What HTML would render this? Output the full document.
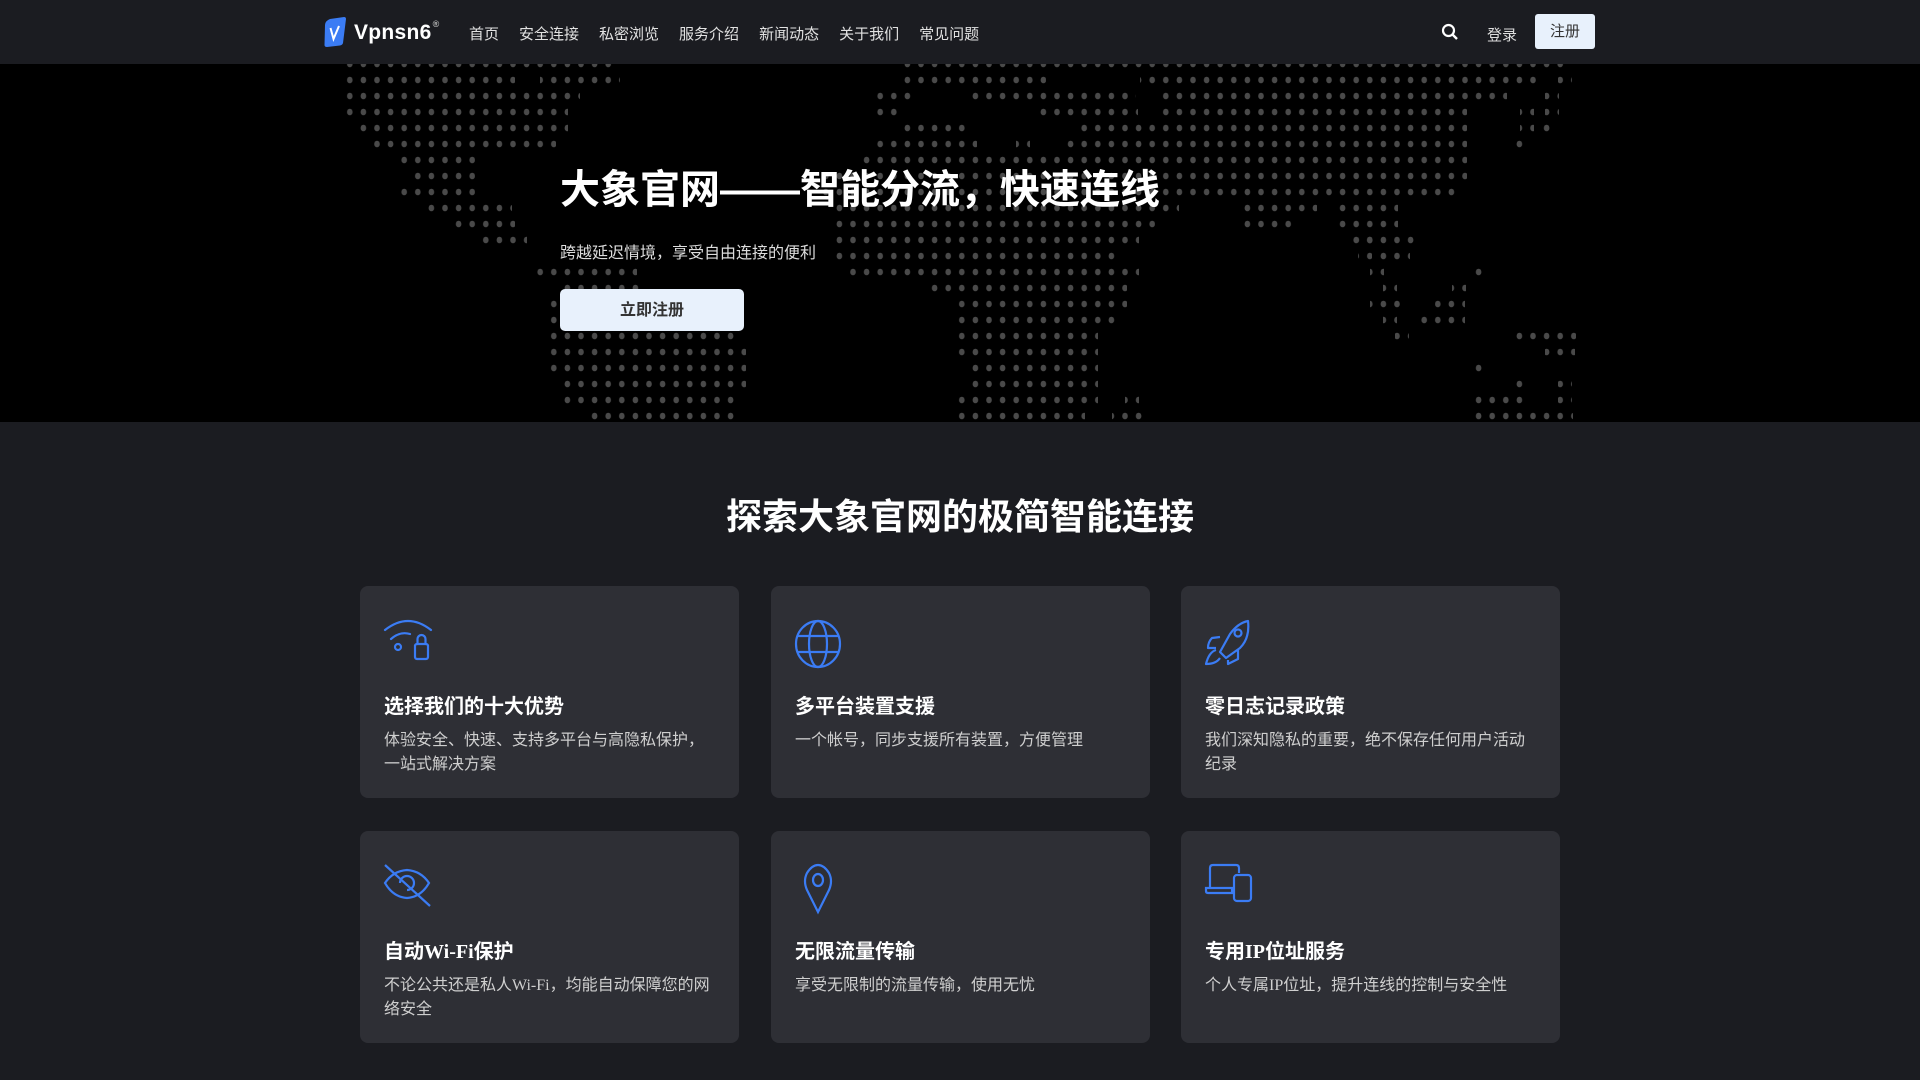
<!DOCTYPE html>
<html><head><meta charset="utf-8">
<style>
*{margin:0;padding:0;box-sizing:border-box}
body{width:1920px;height:1080px;overflow:hidden;background:#1b1c21;font-family:"Liberation Sans","Noto Sans CJK SC",sans-serif;color:#fff}
.hdr{position:absolute;left:0;top:0;width:1920px;height:64px;background:#1b1c21;z-index:2}
.logo{position:absolute;left:324px;top:17px}
.brand{position:absolute;left:354px;top:21px;font-size:21px;font-weight:bold;color:#fff;letter-spacing:0.3px}
.brand sup{font-size:9px;color:#bbb;vertical-align:top;position:relative;top:-2px;margin-left:1px}
.nav{position:absolute;left:469px;top:23px;font-size:15px;color:#e2e2e2;white-space:nowrap}
.nav span{margin-right:20px}
.search{position:absolute;left:1441px;top:23px}
.login{position:absolute;left:1487px;top:24px;font-size:15px;color:#ddd}
.reg{position:absolute;left:1535px;top:14px;width:60px;height:35px;background:#e8f1fc;border-radius:3px;color:#333;font-size:15px;text-align:center;line-height:36px}
.hero{position:absolute;left:0;top:64px;width:1920px;height:358px;background:#000;overflow:hidden}
.hero svg{position:absolute;left:0;top:0}
.h1{position:absolute;left:560px;top:93px;font-size:40px;font-weight:bold;color:#fff;white-space:nowrap;letter-spacing:0}
.sub{position:absolute;left:560px;top:175px;font-size:16px;color:#ddd}
.cta{position:absolute;left:560px;top:225px;width:184px;height:42px;background:#e8f1fc;border-radius:5px;color:#333;font-size:16px;font-weight:bold;text-align:center;line-height:43px}
.sec{position:absolute;left:0;top:488px;width:1920px;text-align:center;font-size:36px;font-weight:bold;color:#fff}
.card{position:absolute;width:379px;height:212px;background:#2e2f35;border-radius:8px;font-family:"Liberation Serif","Noto Sans CJK SC",serif}
.card svg{position:absolute;left:23px;top:32px}
.card h3{position:absolute;left:24px;top:104px;font-size:20px;font-weight:bold;color:#fff}
.card p{position:absolute;left:24px;top:143px;width:335px;font-size:16px;line-height:24px;color:#cfcfcf}
</style></head><body>
<div class="hdr">
<svg class="logo" width="22" height="30" viewBox="0 0 22 30"><path d="M6 2 L20 0 Q22 0 22 2 L19 26 Q18.5 28 16 28.5 L3 30 Q0.5 30 0.5 28 L1 8 Q1 4 6 2Z" fill="#3b7cf4"/><path d="M6.5 11 L9.5 22 L15 9" stroke="#fff" stroke-width="2" fill="none"/></svg>
<div class="brand">Vpnsn6<sup>®</sup></div>
<div class="nav"><span>首页</span><span>安全连接</span><span>私密浏览</span><span>服务介绍</span><span>新闻动态</span><span>关于我们</span><span>常见问题</span></div>
<svg class="search" width="18" height="18" viewBox="0 0 18 18"><circle cx="7.5" cy="7.5" r="5.5" stroke="#fff" stroke-width="2.2" fill="none"/><path d="M11.5 11.5 L16 16" stroke="#fff" stroke-width="2.4"/></svg>
<div class="login">登录</div>
<div class="reg">注册</div>
</div>
<div class="hero">
<svg width="1920" height="358" viewBox="0 64 1920 358">
<defs><pattern id="d" patternUnits="userSpaceOnUse" x="343" y="56" width="13.6" height="16"><ellipse cx="6.8" cy="8" rx="2.8" ry="3.3" fill="#4a4a4a"/></pattern></defs>
<g fill="url(#d)">
<rect x="343" y="56" width="272" height="16"/><rect x="902" y="56" width="665" height="16"/>
<rect x="343" y="72" width="172" height="16"/><rect x="540" y="72" width="80" height="16"/><rect x="902" y="72" width="144" height="16"/><rect x="1140" y="72" width="396" height="16"/><rect x="1558" y="72" width="14" height="16"/>
<rect x="343" y="88" width="237" height="16"/><rect x="874" y="88" width="40" height="16"/><rect x="966" y="88" width="170" height="16"/><rect x="1157" y="88" width="350" height="16"/><rect x="1545" y="88" width="14" height="16"/>
<rect x="343" y="104" width="225" height="16"/><rect x="874" y="104" width="30" height="16"/><rect x="1038" y="104" width="100" height="16"/><rect x="1157" y="104" width="310" height="16"/><rect x="1520" y="104" width="14" height="16"/><rect x="1545" y="104" width="14" height="16"/>
<rect x="355" y="120" width="213" height="16"/><rect x="902" y="120" width="63" height="16"/><rect x="1076" y="120" width="391" height="16"/><rect x="1520" y="120" width="14" height="16"/><rect x="1540" y="120" width="14" height="16"/>
<rect x="372" y="136" width="184" height="16"/><rect x="874" y="136" width="103" height="16"/><rect x="1016" y="136" width="14" height="16"/><rect x="1064" y="136" width="403" height="16"/><rect x="1511" y="136" width="14" height="16"/>
<rect x="400" y="152" width="75" height="16"/><rect x="862" y="152" width="605" height="16"/>
<rect x="414" y="168" width="61" height="16"/><rect x="820" y="168" width="647" height="16"/>
<rect x="400" y="184" width="75" height="16"/><rect x="820" y="184" width="635" height="16"/>
<rect x="424" y="200" width="88" height="16"/><rect x="833" y="200" width="346" height="16"/><rect x="1242" y="200" width="75" height="16"/><rect x="1335" y="200" width="63" height="16"/>
<rect x="453" y="216" width="62" height="16"/><rect x="833" y="216" width="322" height="16"/><rect x="1242" y="216" width="50" height="16"/><rect x="1335" y="216" width="63" height="16"/>
<rect x="481" y="232" width="46" height="16"/><rect x="833" y="232" width="306" height="16"/><rect x="1358" y="232" width="14" height="16"/><rect x="1352" y="232" width="62" height="16"/>
<rect x="833" y="248" width="282" height="16"/><rect x="1358" y="248" width="14" height="16"/><rect x="1380" y="248" width="30" height="16"/>
<rect x="535" y="264" width="102" height="16"/><rect x="848" y="264" width="291" height="16"/><rect x="1370" y="264" width="14" height="16"/><rect x="1473" y="264" width="14" height="16"/>
<rect x="560" y="280" width="85" height="16"/><rect x="929" y="280" width="198" height="16"/><rect x="1383" y="280" width="14" height="16"/><rect x="1452" y="280" width="14" height="16"/>
<rect x="548" y="296" width="40" height="16"/><rect x="955" y="296" width="172" height="16"/><rect x="1370" y="296" width="30" height="16"/><rect x="1435" y="296" width="30" height="16"/>
<rect x="548" y="312" width="190" height="16"/><rect x="955" y="312" width="160" height="16"/><rect x="1383" y="312" width="14" height="16"/><rect x="1420" y="312" width="45" height="16"/>
<rect x="548" y="328" width="186" height="16"/><rect x="955" y="328" width="143" height="16"/><rect x="1395" y="328" width="14" height="16"/><rect x="1514" y="328" width="62" height="16"/>
<rect x="548" y="344" width="198" height="16"/><rect x="955" y="344" width="143" height="16"/><rect x="1545" y="344" width="30" height="16"/>
<rect x="548" y="360" width="198" height="16"/><rect x="970" y="360" width="128" height="16"/><rect x="1473" y="360" width="14" height="16"/>
<rect x="562" y="376" width="184" height="16"/><rect x="970" y="376" width="128" height="16"/><rect x="1514" y="376" width="14" height="16"/><rect x="1558" y="376" width="14" height="16"/>
<rect x="562" y="392" width="172" height="16"/><rect x="955" y="392" width="143" height="16"/><rect x="1125" y="392" width="14" height="16"/><rect x="1473" y="392" width="50" height="16"/><rect x="1558" y="392" width="14" height="16"/>
<rect x="590" y="408" width="144" height="16"/><rect x="955" y="408" width="130" height="16"/><rect x="1112" y="408" width="30" height="16"/><rect x="1473" y="408" width="100" height="16"/>
</g></svg>
<div class="h1">大象官网——智能分流，快速连线</div>
<div class="sub">跨越延迟情境，享受自由连接的便利</div>
<div class="cta">立即注册</div>
</div>
<div class="sec">探索大象官网的极简智能连接</div>

<div class="card" style="left:360px;top:586px">
<svg width="52" height="46" viewBox="0 0 52 46" fill="none" stroke="#3b7cf4" stroke-width="2.2" stroke-linecap="round"><path d="M2 12 Q25 -6 48 12"/><path d="M8 21 Q17 13 27 16"/><circle cx="15" cy="29" r="3"/><rect x="32" y="26" width="13" height="15" rx="2"/><path d="M34.5 26 V21 a4 4 0 0 1 8 0 V26"/></svg>
<h3>选择我们的十大优势</h3><p>体验安全、快速、支持多平台与高隐私保护，一站式解决方案</p></div>
<div class="card" style="left:771px;top:586px">
<svg width="52" height="52" viewBox="0 0 52 52" fill="none" stroke="#3b7cf4" stroke-width="2.2"><ellipse cx="24" cy="26" rx="22" ry="23"/><ellipse cx="24" cy="26" rx="9" ry="23"/><path d="M3 18 H45 M3 34 H45"/></svg>
<h3>多平台装置支援</h3><p>一个帐号，同步支援所有装置，方便管理</p></div>
<div class="card" style="left:1181px;top:586px">
<svg width="52" height="52" viewBox="0 0 52 52" fill="none" stroke="#3b7cf4" stroke-width="2.2" stroke-linejoin="round"><path d="M44 3 Q46 20 36 30 L22 40 L16 34 L26 16 Q34 5 44 3Z"/><circle cx="34" cy="15" r="3.5"/><path d="M16 19 L8 20 Q4 24 4 30 L12 30"/><path d="M24 42 L24 46 L34 41 L34 32"/><path d="M12 32 Q5 34 2 46 Q12 46 16 40"/></svg>
<h3>零日志记录政策</h3><p>我们深知隐私的重要，绝不保存任何用户活动纪录</p></div>

<div class="card" style="left:360px;top:831px">
<svg width="52" height="46" viewBox="0 0 52 46" fill="none" stroke="#3b7cf4" stroke-width="2.2"><path d="M2 20 Q10 8 24 7 Q38 8 46 20 Q38 34 24 35 Q10 34 2 20Z"/><path d="M17 20 a7 7 0 0 1 14 0 a7 7 0 0 1 -7 7"/><path d="M2 2 L47 43"/></svg>
<h3>自动Wi-Fi保护</h3><p>不论公共还是私人Wi-Fi，均能自动保障您的网络安全</p></div>
<div class="card" style="left:771px;top:831px">
<svg width="52" height="52" viewBox="0 0 52 52" fill="none" stroke="#3b7cf4" stroke-width="2.2"><path d="M24 49 L13 27 Q9 18 13 10 Q18 2 24 2 Q30 2 35 10 Q39 18 35 27 Z"/><ellipse cx="24" cy="17" rx="5" ry="6"/></svg>
<h3>无限流量传输</h3><p>享受无限制的流量传输，使用无忧</p></div>
<div class="card" style="left:1181px;top:831px">
<svg width="52" height="46" viewBox="0 0 52 46" fill="none" stroke="#3b7cf4" stroke-width="2.2"><path d="M6 25 V5 Q6 2 9 2 H32 Q35 2 35 5 V10"/><path d="M2 25 H28 V30 H4 Q2 30 2 28Z"/><rect x="30" y="12" width="17" height="26" rx="3"/></svg>
<h3>专用IP位址服务</h3><p>个人专属IP位址，提升连线的控制与安全性</p></div>
</body></html>
